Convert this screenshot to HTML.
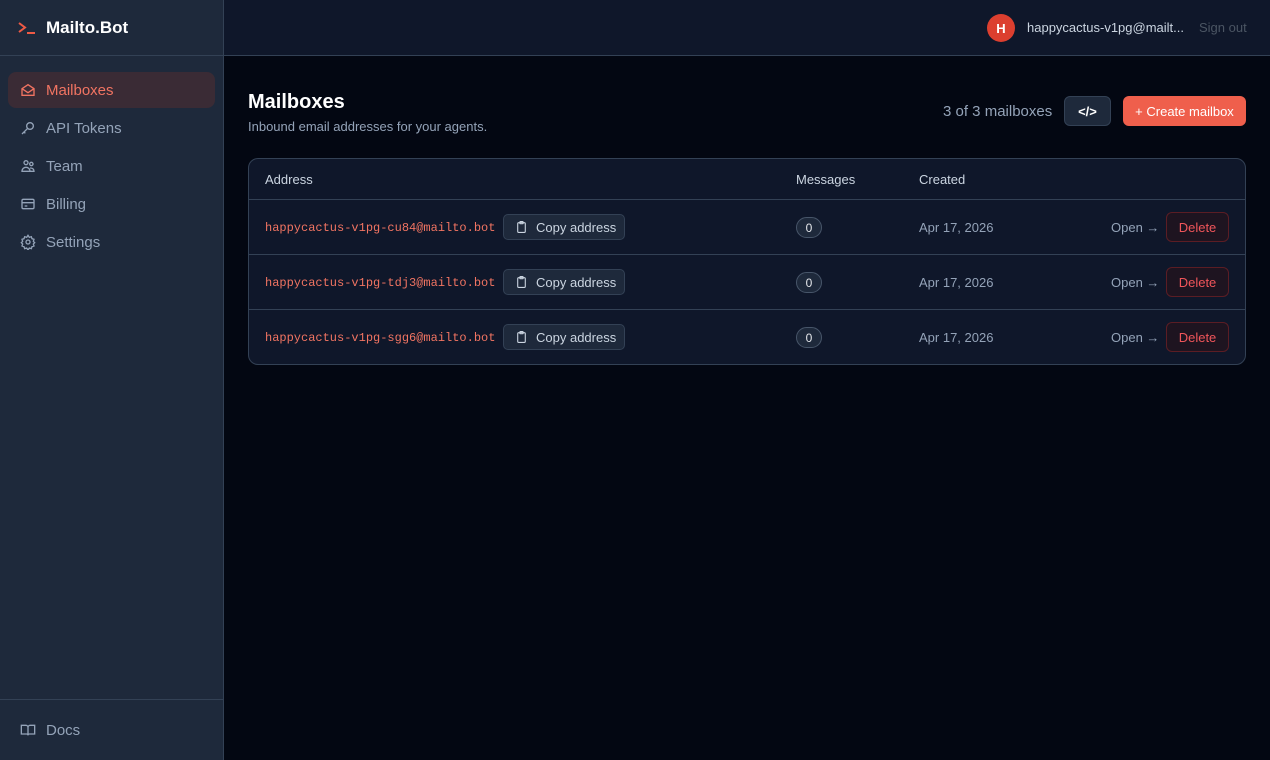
<!DOCTYPE html>
<html><head><style>
*{box-sizing:border-box;margin:0;padding:0}
body{width:1270px;height:760px;background:#030712;font-family:"Liberation Sans",sans-serif;position:relative;overflow:hidden;color:#e5e7eb}
.side{position:absolute;left:0;top:0;width:224px;height:760px;background:#1e293b;border-right:1px solid #334155}
.logo{height:56px;border-bottom:1px solid #334155;display:flex;align-items:center;padding-left:18px;font-size:17px;font-weight:bold;color:#fff}
.logo svg{margin-right:11px}
.nav{padding:16px 8px}
.item{height:36px;display:flex;align-items:center;padding-left:12px;margin-bottom:2px;font-size:15px;color:#94a3b8;border-radius:8px}
.item svg{margin-right:10px}
.item.act{background:#3a2b35;color:#f17462}
.docs{position:absolute;bottom:0;left:0;right:0;height:61px;border-top:1px solid #334155;display:flex;align-items:center;padding-left:20px;font-size:15px;color:#94a3b8}
.docs svg{margin-right:10px}
.top{position:absolute;left:224px;right:0;top:0;height:56px;background:#0f172a;border-bottom:1px solid #334155}
.av{position:absolute;left:763px;top:14px;width:28px;height:28px;border-radius:50%;background:#dc3f2f;color:#fff;font-size:13px;font-weight:bold;display:flex;align-items:center;justify-content:center}
.em{position:absolute;left:803px;top:20px;font-size:13px;color:#cbd5e1}
.so{position:absolute;left:975px;top:20px;font-size:13px;color:#4b5563}
h1{position:absolute;left:248px;top:91px;font-size:20px;color:#fff}
.sub{position:absolute;left:248px;top:119px;font-size:13px;color:#94a3b8}
.cnt{position:absolute;left:943px;top:103px;font-size:15px;color:#94a3b8}
.code{position:absolute;left:1064px;top:96px;width:47px;height:30px;border:1px solid #334155;background:#1e293b;border-radius:6px;color:#fff;font-size:13px;font-weight:bold;display:flex;align-items:center;justify-content:center}
.create{position:absolute;left:1123px;top:96px;width:123px;height:30px;background:#ef5f4c;border-radius:6px;color:#fff;font-size:13px;display:flex;align-items:center;justify-content:center}
.tbl{position:absolute;left:248px;top:158px;width:998px;height:207px;border:1px solid #334155;border-radius:10px;background:#0f172a;overflow:hidden}
.hd{height:41px;border-bottom:1px solid #334155;font-size:13px;color:#cbd5e1;position:relative}
.hd span,.row span{position:absolute}
.row{height:55px;border-bottom:1px solid #334155;position:relative;font-size:13px}
.row:last-child{border-bottom:none}
.addr{left:16px;top:20px;font-family:"Liberation Mono",monospace;color:#f17462;font-size:12px}
.cp{left:254px;top:14px;width:122px;height:26px;border:1px solid #334155;background:#1e293b;border-radius:5px;color:#cbd5e1;display:flex;align-items:center;padding-left:11px}
.cp svg{margin-right:8px}
.badge{left:547px;top:17px;width:26px;height:21px;border-radius:11px;background:#1e293b;border:1px solid #475569;color:#e5e7eb;font-size:12px;display:flex;align-items:center;justify-content:center}
.dt{left:670px;top:20px;color:#94a3b8}
.op{left:862px;top:20px;color:#94a3b8;white-space:nowrap}
.del{left:917px;top:12px;width:63px;height:30px;border:1px solid #5b1d24;background:#1e1420;border-radius:6px;color:#f0555a;display:flex;align-items:center;justify-content:center}
</style></head><body>
<div class="side">
<div class="logo"><svg width="17" height="12" viewBox="0 0 17 12" fill="none" stroke="#ef5a45" stroke-width="2"><path d="M1 1l6 4.5L1 10"/><path d="M9 11h8"/></svg>Mailto.Bot</div>
<div class="nav">
<div class="item act"><svg width="16" height="16" viewBox="0 0 24 24" fill="none" stroke="#f17462" stroke-width="2"><path d="M3 10l9-6 9 6v10H3z"/><path d="M3 10l9 6 9-6"/></svg>Mailboxes</div>
<div class="item"><svg width="16" height="16" viewBox="0 0 24 24" fill="none" stroke="#94a3b8" stroke-width="2"><circle cx="15" cy="9" r="5"/><path d="M11 13l-8 8M6 18l2 2"/></svg>API Tokens</div>
<div class="item"><svg width="16" height="16" viewBox="0 0 24 24" fill="none" stroke="#94a3b8" stroke-width="2"><circle cx="9" cy="7" r="3"/><circle cx="17" cy="9" r="2.5"/><path d="M3 20c0-4 3-6 6-6s6 2 6 6zM15 15c3 0 6 1 6 5h-5"/></svg>Team</div>
<div class="item"><svg width="16" height="16" viewBox="0 0 24 24" fill="none" stroke="#94a3b8" stroke-width="2"><rect x="3" y="5" width="18" height="14" rx="2"/><path d="M3 10h18M7 15h4"/></svg>Billing</div>
<div class="item"><svg width="16" height="16" viewBox="0 0 24 24" fill="none" stroke="#94a3b8" stroke-width="2"><circle cx="12" cy="12" r="3"/><path d="M12 2l2 3 3-1 1 3 3 1-1 3 2 2-2 2 1 3-3 1-1 3-3-1-2 3-2-3-3 1-1-3-3-1 1-3-2-2 2-2-1-3 3-1 1-3 3 1z"/></svg>Settings</div>
</div>
<div class="docs"><svg width="16" height="16" viewBox="0 0 24 24" fill="none" stroke="#94a3b8" stroke-width="2"><path d="M2 5h7a3 3 0 013 3v12a2 2 0 00-2-2H2zM22 5h-7a3 3 0 00-3 3v12a2 2 0 012-2h8z"/></svg>Docs</div>
</div>
<div class="top"><div class="av">H</div><div class="em">happycactus-v1pg@mailt...</div><div class="so">Sign out</div></div>
<h1>Mailboxes</h1>
<div class="sub">Inbound email addresses for your agents.</div>
<div class="cnt">3 of 3 mailboxes</div>
<div class="code">&lt;/&gt;</div>
<div class="create">+ Create mailbox</div>
<div class="tbl">
<div class="hd"><span style="left:16px;top:13px">Address</span><span style="left:547px;top:13px">Messages</span><span style="left:670px;top:13px">Created</span></div>
<div class="row"><span class="addr" style="top:21px">happycactus-v1pg-cu84@mailto.bot</span><span class="cp"><svg width="13" height="14" viewBox="0 0 24 24" fill="none" stroke="#cbd5e1" stroke-width="2"><rect x="5" y="4" width="14" height="18" rx="2"/><rect x="9" y="2" width="6" height="4" rx="1"/></svg>Copy address</span><span class="badge">0</span><span class="dt">Apr 17, 2026</span><span class="op">Open →</span><span class="del">Delete</span></div>
<div class="row"><span class="addr" style="top:21px">happycactus-v1pg-tdj3@mailto.bot</span><span class="cp"><svg width="13" height="14" viewBox="0 0 24 24" fill="none" stroke="#cbd5e1" stroke-width="2"><rect x="5" y="4" width="14" height="18" rx="2"/><rect x="9" y="2" width="6" height="4" rx="1"/></svg>Copy address</span><span class="badge">0</span><span class="dt">Apr 17, 2026</span><span class="op">Open →</span><span class="del">Delete</span></div>
<div class="row"><span class="addr" style="top:21px">happycactus-v1pg-sgg6@mailto.bot</span><span class="cp"><svg width="13" height="14" viewBox="0 0 24 24" fill="none" stroke="#cbd5e1" stroke-width="2"><rect x="5" y="4" width="14" height="18" rx="2"/><rect x="9" y="2" width="6" height="4" rx="1"/></svg>Copy address</span><span class="badge">0</span><span class="dt">Apr 17, 2026</span><span class="op">Open →</span><span class="del">Delete</span></div>
</div>
</body></html>
